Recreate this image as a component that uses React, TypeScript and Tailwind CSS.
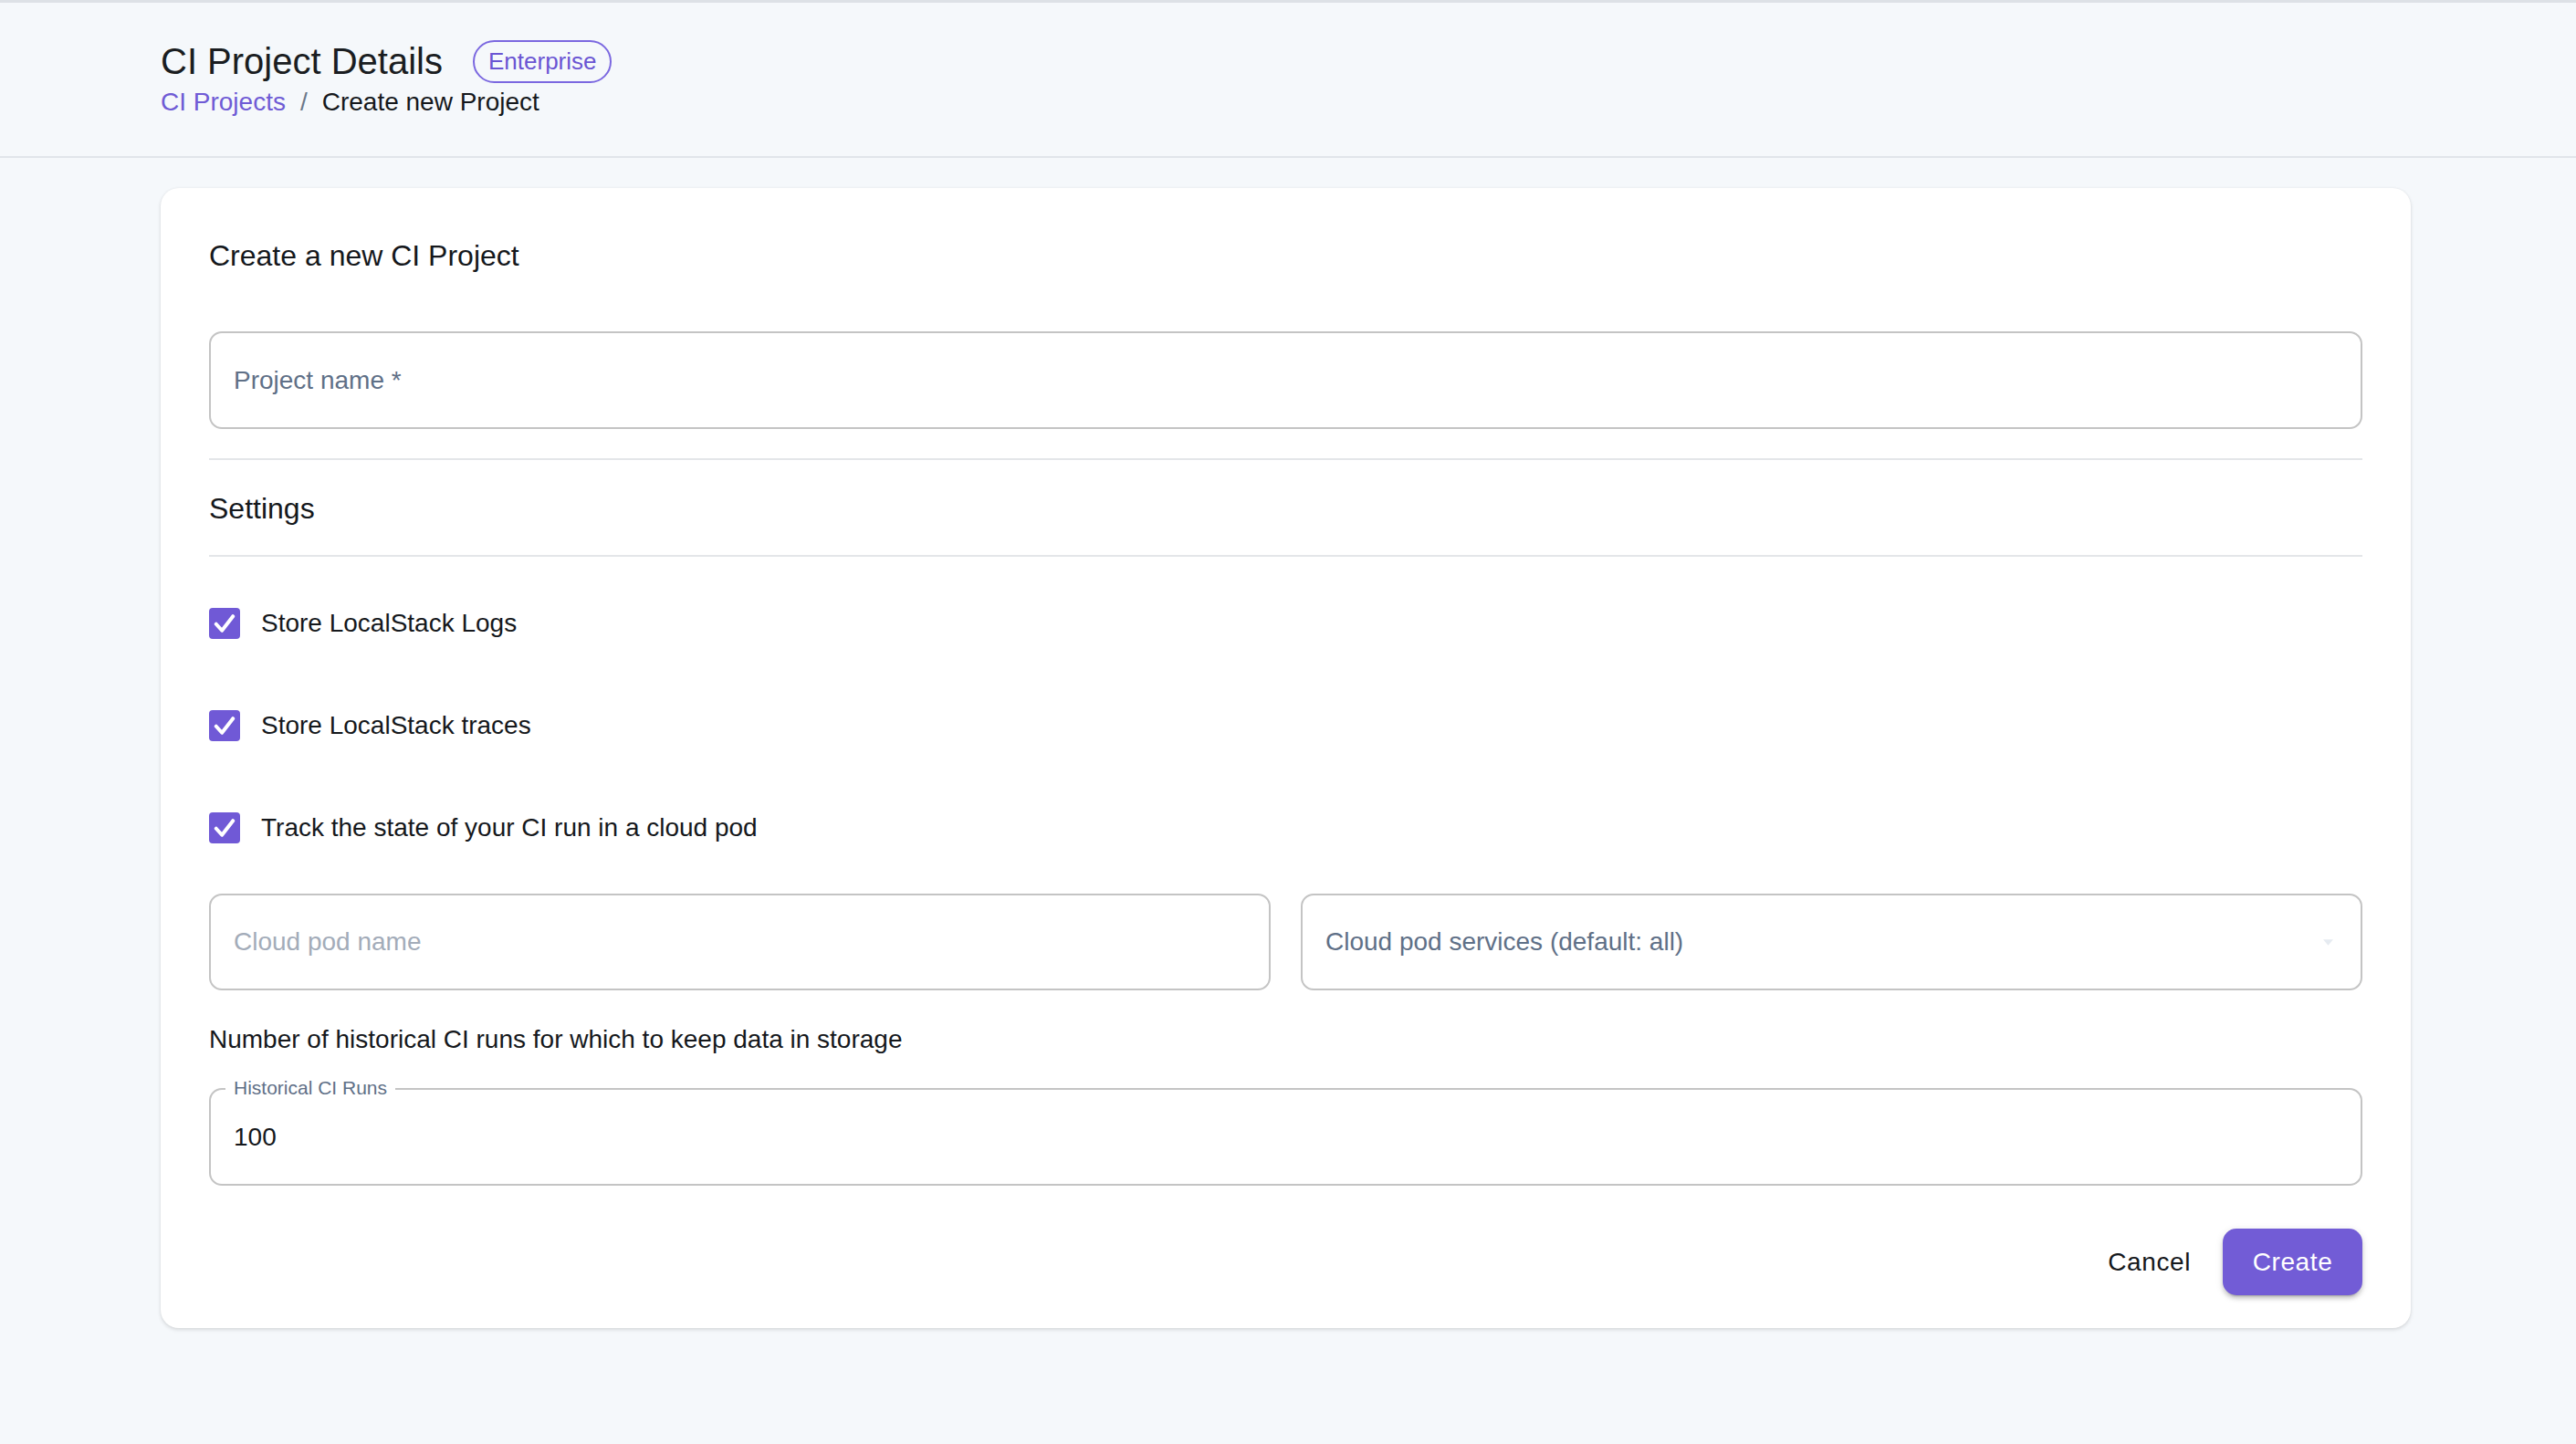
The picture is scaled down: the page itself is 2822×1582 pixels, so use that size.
import * as React from 'react';

const CheckRow: React.FC<{ label: string }> = ({ label }) => (
  <label className="flex h-[112px] items-center gap-[23px] cursor-pointer">
    <span className="flex h-[34px] w-[34px] items-center justify-center rounded-[4px] bg-[#7059d6]">
      <svg viewBox="0 0 24 24" className="h-[34px] w-[34px]" fill="none">
        <path d="M5.5 12.5l4.5 5L18.5 6.5" stroke="white" strokeWidth="2.8" strokeLinecap="round" strokeLinejoin="round" />
      </svg>
    </span>
    <span className="text-[28px] leading-[42px] text-[#15181c]">{label}</span>
  </label>
);

const App: React.FC = () => {
  return (
    <div className="min-h-[1582px] w-full bg-[#f5f8fb] font-['Liberation_Sans',Arial,sans-serif] border-t-[3px] border-[#dde1e6]">
      {/* header */}
      <header className="border-b-2 border-[#e1e5ea] px-[176px] pt-[40px] pb-[38px]">
        <div className="flex items-center gap-[33px]">
          <h1 className="text-[40px] leading-[48px] text-[#1a1d21]">CI Project Details</h1>
          <span className="flex h-[47px] items-center rounded-full border-2 border-[#7b68e0] px-[15px] text-[26px] text-[#6a55d3]">
            Enterprise
          </span>
        </div>
        <nav className="flex items-center text-[28px] leading-[42px]">
          <a className="text-[#6f5bd5]">CI Projects</a>
          <span className="mx-[16px] text-[#6b7889]">/</span>
          <span className="text-[#15181c]">Create new Project</span>
        </nav>
      </header>

      <main className="pl-[176px] pr-[181px] pt-[33px]">
        <div className="rounded-[20px] bg-white px-[53px] pt-[50px] pb-[36px] shadow-[0_2px_4px_rgba(0,0,0,0.12),0_0_3px_rgba(0,0,0,0.05)]">
          <h2 className="text-[32px] leading-[48px] text-[#15181c]">Create a new CI Project</h2>

          <input
            placeholder="Project name *"
            className="mt-[59px] block h-[107px] w-full rounded-[14px] border-2 border-[#c4c4c4] px-[25px] text-[28px] text-[#15181c] outline-none placeholder:text-[#5f7087]"
          />

          <div className="mt-[32px] h-[2px] bg-[#e4e6e9]" />
          <h3 className="mt-[29px] text-[32px] leading-[48px] text-[#15181c]">Settings</h3>
          <div className="mt-[27px] h-[2px] bg-[#e4e6e9]" />

          <div className="mt-[17px] flex flex-col">
            <CheckRow label="Store LocalStack Logs" />
            <CheckRow label="Store LocalStack traces" />
            <CheckRow label="Track the state of your CI run in a cloud pod" />
          </div>

          <div className="mt-[16px] grid grid-cols-2 gap-[33px]">
            <input
              placeholder="Cloud pod name"
              className="block h-[106px] w-full rounded-[14px] border-2 border-[#c4c4c4] px-[25px] text-[28px] text-[#15181c] outline-none placeholder:text-[#a3acb9]"
            />
            <div className="flex h-[106px] items-center justify-between rounded-[14px] border-2 border-[#c4c4c4] pl-[25px] pr-[30px]">
              <span className="text-[28px] text-[#5f7087]">Cloud pod services (default: all)</span>
              <svg viewBox="0 0 10 6" className="h-[7px] w-[11px]">
                <path d="M0 0h10L5 6z" fill="#e6ebf1" />
              </svg>
            </div>
          </div>

          <p className="mt-[33px] text-[28px] leading-[42px] text-[#15181c]">
            Number of historical CI runs for which to keep data in storage
          </p>

          <div className="relative mt-[32px] h-[107px] rounded-[14px] border-2 border-[#c4c4c4]">
            <span className="absolute left-[16px] top-[-14px] bg-white px-[9px] text-[21px] leading-[24px] text-[#5f7087]">
              Historical CI Runs
            </span>
            <input
              defaultValue="100"
              className="block h-full w-full rounded-[14px] bg-transparent px-[25px] text-[28px] text-[#15181c] outline-none"
            />
          </div>

          <div className="mt-[47px] flex items-center justify-end gap-[35px]">
            <button className="text-[28px] tracking-[0.6px] text-[#15181c]">Cancel</button>
            <button className="flex h-[73px] w-[153px] items-center justify-center rounded-[15px] bg-[#725cd6] text-[28px] tracking-[0.6px] text-white shadow-[0_5px_2px_-4px_rgba(0,0,0,0.2),0_4px_4px_rgba(0,0,0,0.14),0_2px_9px_rgba(0,0,0,0.12)]">
              Create
            </button>
          </div>
        </div>
      </main>
    </div>
  );
};

export default App;
